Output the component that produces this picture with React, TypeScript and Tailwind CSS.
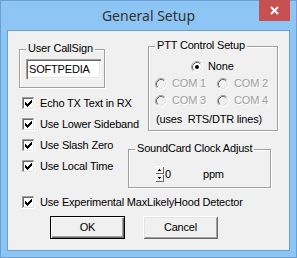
import type { ReactNode } from 'react';
import clsx from 'clsx';

// classic win32 check glyph, 7x7 pixel columns each 3px tall
const CHECK_COLS = [2, 3, 4, 3, 2, 1, 0];

function CheckBox() {
  const d = CHECK_COLS.map((top, i) => `M${3 + i} ${3 + top}h1v3h-1z`).join('');
  return (
    <svg width="13" height="13" viewBox="0 0 13 13" shapeRendering="crispEdges" className="shrink-0">
      <rect x="0" y="0" width="13" height="13" fill="#fff" />
      <rect x="0" y="0" width="12" height="1" fill="#a0a0a0" />
      <rect x="0" y="0" width="1" height="12" fill="#a0a0a0" />
      <rect x="1" y="1" width="10" height="1" fill="#696969" />
      <rect x="1" y="1" width="1" height="10" fill="#696969" />
      <rect x="1" y="11" width="11" height="1" fill="#e3e3e3" />
      <rect x="11" y="1" width="1" height="11" fill="#e3e3e3" />
      <path d={d} fill="#000" />
    </svg>
  );
}

function Radio({ checked, disabled }: { checked?: boolean; disabled?: boolean }) {
  return (
    <svg width="12" height="12" viewBox="0 0 12 12" className="shrink-0">
      <circle cx="6" cy="6" r="5" fill={disabled ? '#f0f0f0' : '#fff'} />
      <path d="M2.11 9.89 A5.5 5.5 0 0 1 9.89 2.11" fill="none" stroke="#a0a0a0" />
      <path d="M9.89 2.11 A5.5 5.5 0 0 1 2.11 9.89" fill="none" stroke="#fff" />
      <path d="M2.82 9.18 A4.5 4.5 0 0 1 9.18 2.82" fill="none" stroke="#696969" />
      <path d="M9.18 2.82 A4.5 4.5 0 0 1 2.82 9.18" fill="none" stroke="#e3e3e3" />
      {checked && <circle cx="6" cy="6" r="2" fill="#000" />}
    </svg>
  );
}

function CheckRow({ label }: { label: string }) {
  return (
    <div className="flex h-[13px] items-center gap-[5px] whitespace-nowrap">
      <CheckBox />
      <span className="leading-[13px]">{label}</span>
    </div>
  );
}

function RadioRow({ label, checked, disabled }: { label: string; checked?: boolean; disabled?: boolean }) {
  return (
    <div className="flex h-[13px] items-center gap-[5px] whitespace-nowrap">
      <Radio checked={checked} disabled={disabled} />
      <span
        className={clsx(
          'leading-[13px]',
          disabled && 'text-[#a0a0a0] [text-shadow:1px_1px_0_#fff]'
        )}
      >
        {label}
      </span>
    </div>
  );
}

function GroupBox({ label, className, children }: { label: string; className?: string; children?: ReactNode }) {
  return (
    <div
      className={clsx(
        'relative shrink-0 border border-[#a0a0a0] shadow-[inset_1px_1px_0_#fff,1px_1px_0_#fff]',
        className
      )}
    >
      <span className="absolute -top-[8px] left-[6px] whitespace-nowrap bg-[#f0f0f0] px-[2px] leading-[13px]">
        {label}
      </span>
      {children}
    </div>
  );
}

function SpinButton({ up }: { up?: boolean }) {
  return (
    <div className="flex h-[8px] w-[9px] items-center justify-center bg-[#f0f0f0] shadow-[inset_1px_1px_0_#fff,inset_-1px_-1px_0_#696969]">
      <svg width="3" height="2" viewBox="0 0 3 2" shapeRendering="crispEdges">
        {up ? <path d="M1 0h1v1h1v1h-3v-1h1z" fill="#000" /> : <path d="M0 0h3v1h-1v1h-1v-1h-1z" fill="#000" />}
      </svg>
    </div>
  );
}

function DialogButton({ label, isDefault }: { label: string; isDefault?: boolean }) {
  return (
    <button
      className={clsx(
        'flex h-[23px] w-[75px] items-center justify-center bg-[#f0f0f0] leading-[13px]',
        isDefault
          ? 'border border-black shadow-[inset_1px_1px_0_#fff,inset_-1px_-1px_0_#696969,inset_-2px_-2px_0_#a0a0a0]'
          : 'shadow-[inset_1px_1px_0_#fff,inset_-1px_-1px_0_#696969,inset_2px_2px_0_#e3e3e3,inset_-2px_-2px_0_#a0a0a0]'
      )}
    >
      {label}
    </button>
  );
}

export default function App() {
  return (
    <div className="relative flex h-[258px] w-[297px] flex-col border border-[#6a9fd1] bg-[#8dc5f5] px-[6px] pb-[6px]">
      {/* title bar */}
      <div className="flex h-[29px] shrink-0 items-center justify-center pb-[1px] font-['Noto_Sans',sans-serif] text-[14px] text-[#333]">
        General Setup
      </div>
      <div className="absolute -top-px left-[258px] flex h-[21px] w-[31px] items-center justify-center bg-[#c75050]">
        <svg width="9" height="9" viewBox="0 0 9 9">
          <path d="M1 1L8 8M8 1L1 8" stroke="#fff" strokeWidth="2" />
        </svg>
      </div>

      {/* client */}
      <div className="flex h-[221px] w-[283px] flex-col border border-[#6a9fd1] bg-[#f0f0f0] font-['Liberation_Sans',Arial,sans-serif] text-[11px] tracking-[-0.18px] text-black">
        <div className="flex items-start">
          <div className="ml-[11px] flex w-[129px] flex-col">
            <GroupBox label="User CallSign" className="mt-[18px] h-[39px] w-[86px]">
              <div className="ml-[6px] mt-[9px] flex h-[20px] w-[75px] items-center bg-white pl-[3px] shadow-[inset_1px_1px_0_#a0a0a0,inset_2px_2px_0_#696969,inset_-1px_-1px_0_#fff,inset_-2px_-2px_0_#e3e3e3]">
                SOFTPEDIA
              </div>
            </GroupBox>
            <div className="ml-[3px] mt-[9px] flex flex-col gap-[8px]">
              <CheckRow label="Echo TX Text in RX" />
              <CheckRow label="Use Lower Sideband" />
            </div>
          </div>
          <GroupBox label="PTT Control Setup" className="mt-[15px] h-[85px] w-[130px]">
            <div className="flex flex-col pt-[13px]">
              <div className="ml-[42px]">
                <RadioRow label="None" checked />
              </div>
              <div className="ml-[6px] mt-[4px] grid grid-cols-[62px_62px] gap-y-[4px]">
                <RadioRow label="COM 1" disabled />
                <RadioRow label="COM 2" disabled />
                <RadioRow label="COM 3" disabled />
                <RadioRow label="COM 4" disabled />
              </div>
              <div className="ml-[7px] mt-[6px] whitespace-nowrap leading-[13px]">(uses&nbsp; RTS/DTR lines)</div>
            </div>
          </GroupBox>
        </div>

        <div className="flex items-start">
          <div className="ml-[14px] mt-[8px] flex w-[106px] flex-col gap-[8px]">
            <CheckRow label="Use Slash Zero" />
            <CheckRow label="Use Local Time" />
          </div>
          <GroupBox label="SoundCard Clock Adjust" className="mt-[18px] h-[39px] w-[143px]">
            <div className="ml-[26px] mt-[16px] flex items-center">
              <div className="flex flex-col">
                <SpinButton up />
                <SpinButton />
              </div>
              <span className="ml-px leading-[13px]">0</span>
              <span className="ml-[32px] leading-[13px]">ppm</span>
            </div>
          </GroupBox>
        </div>

        <div className="ml-[14px] mt-[8px]">
          <CheckRow label="Use Experimental MaxLikelyHood Detector" />
        </div>

        <div className="ml-[42px] mt-[7px] flex gap-[18px]">
          <DialogButton label="OK" isDefault />
          <DialogButton label="Cancel" />
        </div>
      </div>
    </div>
  );
}
